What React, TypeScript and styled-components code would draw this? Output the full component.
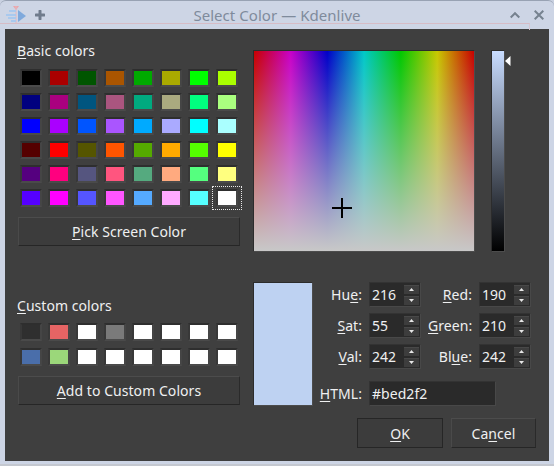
import React from "react";
import styled, { createGlobalStyle } from "styled-components";

const Global = createGlobalStyle`
  html, body { margin: 0; padding: 0; background: #c9d1e1; }
  body { font-family: "Noto Sans", "Open Sans", sans-serif; font-size: 14px; letter-spacing: 0.05px; color: #eff0f1; }
`;

const Window = styled.div`
  width: 554px;
  height: 466px;
  box-sizing: border-box;
  display: flex;
  flex-direction: column;
  overflow: hidden;
  background: #cdd5e5;
  border-top: 1px solid #98a2b3;
  border-radius: 6px 6px 0 0;
  box-shadow: inset 0 -2px 0 #c4c8d0;
`;

const TitleBar = styled.div`
  position: relative;
  height: 28px;
  flex: none;
  display: flex;
  align-items: center;
  padding: 0 10px 0 6px;
  &::after {
    content: "";
    position: absolute;
    left: 0;
    width: 529px;
    top: 22px;
    height: 6px;
    border-top: 1px solid #d6bcc6;
    border-right: 1px solid #d6c6d2;
  }
`;

const TitleIcons = styled.div`
  display: flex;
  align-items: center;
  gap: 7px;
  width: 60px;
  z-index: 1;
`;

const TitleText = styled.div`
  flex: 1;
  text-align: center;
  color: #7f8b9c;
  font-size: 15px;
  padding-left: 4px;
  z-index: 1;
`;

const TitleButtons = styled.div`
  width: 60px;
  display: flex;
  justify-content: flex-end;
  gap: 14px;
  z-index: 1;
`;

const Content = styled.div`
  flex: none;
  height: 432px;
  margin: 0 5px;
  background: #3f3f3f;
  display: flex;
  padding-left: 13px;
`;

const LeftColumn = styled.div`
  width: 223px;
  flex: none;
  display: flex;
  flex-direction: column;
`;

const SectionLabel = styled.div<{ $top: number }>`
  margin-top: ${(p) => p.$top}px;
  height: 19px;
  line-height: 19px;
  font-size: 14px;
  margin-left: -1px;
`;

const Key = styled.span`
  text-decoration: underline;
  text-underline-offset: 2px;
  text-decoration-thickness: 1px;
`;

const SwatchGrid = styled.div<{ $top: number; $rowGap: number }>`
  margin-top: ${(p) => p.$top}px;
  margin-left: 2px;
  display: grid;
  grid-template-columns: repeat(8, 22px);
  column-gap: 6px;
  row-gap: ${(p) => p.$rowGap}px;
`;

const Swatch = styled.div<{ $color: string; $selected?: boolean }>`
  position: relative;
  box-sizing: border-box;
  width: 22px;
  height: 18px;
  background: ${(p) => p.$color};
  border: 2px solid;
  border-color: #2e2e2e #454545 #4a4a4a #383838;
  ${(p) =>
    p.$selected
      ? `&::after {
          content: "";
          position: absolute;
          inset: -5px -6px -5px -6px;
          border: 1px dotted #e8e8e8;
        }`
      : ""}
`;

const PushButton = styled.div<{ $top?: number; $width?: number; $height?: number; $default?: boolean }>`
  box-sizing: border-box;
  margin-top: ${(p) => p.$top ?? 0}px;
  width: ${(p) => p.$width ?? 222}px;
  height: ${(p) => p.$height ?? 29}px;
  display: flex;
  align-items: center;
  justify-content: center;
  font-size: 14px;
  background: #3c3c3c;
  border: 1px solid;
  border-color: ${(p) =>
    p.$default ? "#262626" : "#4c4c4c #2a2a2a #262626 #4a4a4a"};
`;

const RightColumn = styled.div`
  margin-left: 12px;
  width: 296px;
  flex: none;
  display: flex;
  flex-direction: column;
  padding-top: 21px;
`;

const PickerRow = styled.div`
  display: flex;
  height: 202px;
`;

const Spectrum = styled.div`
  position: relative;
  box-sizing: border-box;
  width: 222px;
  height: 202px;
  border: 1px solid #2c2c2c;
  border-right-color: #4c4c4c;
  border-bottom-color: #4c4c4c;
  background:
    linear-gradient(to bottom, rgba(200, 200, 200, 0), #c8c8c8),
    linear-gradient(to right, #c80000, #c800c8, #0000c8, #00c8c8, #00c800, #c8c800, #c80000);
`;

const Cross = styled.svg`
  position: absolute;
  left: 78px;
  top: 147px;
`;

const ValueStrip = styled.div`
  position: relative;
  box-sizing: border-box;
  margin-left: 16px;
  width: 14px;
  height: 202px;
  border: 1px solid #2c2c2c;
  border-right-color: #4c4c4c;
  border-bottom-color: #4c4c4c;
  background: linear-gradient(to bottom, #c8dcff, #000000);
`;

const ValueArrow = styled.svg`
  position: absolute;
  left: 13px;
  top: 5px;
`;

const BottomRow = styled.div`
  margin-top: 30px;
  display: flex;
`;

const Preview = styled.div`
  box-sizing: border-box;
  flex: none;
  width: 60px;
  height: 124px;
  background: #bed2f2;
  border: 1px solid #2c2c2c;
  border-right-color: #4c4c4c;
  border-bottom-color: #4c4c4c;
`;

const Fields = styled.div`
  display: grid;
  grid-template-columns: 49px 52px 44px 52px;
  grid-auto-rows: 25px;
  column-gap: 7px;
  row-gap: 6px;
  align-items: center;
`;

const FieldLabel = styled.label`
  text-align: right;
  font-size: 14px;
  white-space: nowrap;
`;

const HtmlRow = styled.div`
  grid-column: 1 / span 4;
  align-self: start;
  margin-top: 6px;
  display: grid;
  grid-template-columns: 49px 127px;
  column-gap: 7px;
  align-items: center;
  height: 25px;
`;

const Spin = styled.div`
  box-sizing: border-box;
  height: 25px;
  width: 52px;
  background: #2a2a2a;
  border: 1px solid #484848;
  border-top-color: #333;
  border-left-color: #333;
  display: flex;
  align-items: center;
  padding-left: 2px;
  font-size: 14px;
`;

const SpinValue = styled.span`
  flex: 1;
`;

const SpinButtons = styled.div`
  width: 15px;
  margin-right: 1px;
  display: flex;
  flex-direction: column;
  gap: 2px;
`;

const SpinButton = styled.div`
  height: 9px;
  background: #3d3d3d;
  border-top: 1px solid #484848;
  box-sizing: border-box;
  display: flex;
  align-items: center;
  justify-content: center;
`;

const HtmlInput = styled.div`
  box-sizing: border-box;
  height: 25px;
  background: #2a2a2a;
  border: 1px solid #484848;
  border-top-color: #333;
  border-left-color: #333;
  display: flex;
  align-items: center;
  padding-left: 2px;
  font-size: 14px;
`;

const DialogButtons = styled.div`
  margin-top: 12px;
  display: flex;
  justify-content: flex-end;
  gap: 8px;
  padding-right: 13px;
`;

const basic = [
  "#000000", "#aa0000", "#005500", "#aa5500", "#00aa00", "#aaaa00", "#00ff00", "#aaff00",
  "#00007f", "#aa007f", "#00557f", "#aa557f", "#00aa7f", "#aaaa7f", "#00ff7f", "#aaff7f",
  "#0000ff", "#aa00ff", "#0055ff", "#aa55ff", "#00aaff", "#aaaaff", "#00ffff", "#aaffff",
  "#550000", "#ff0000", "#555500", "#ff5500", "#55aa00", "#ffaa00", "#55ff00", "#ffff00",
  "#55007f", "#ff007f", "#55557f", "#ff557f", "#55aa7f", "#ffaa7f", "#55ff7f", "#ffff7f",
  "#5500ff", "#ff00ff", "#5555ff", "#ff55ff", "#55aaff", "#ffaaff", "#55ffff", "#ffffff",
];

const custom = [
  "#2f2f2f", "#e66464", "#ffffff", "#7a7a7a", "#ffffff", "#ffffff", "#ffffff", "#ffffff",
  "#4a6eaa", "#9bd77a", "#ffffff", "#ffffff", "#ffffff", "#ffffff", "#ffffff", "#ffffff",
];

const SpinBox = ({ value }: { value: string }) => (
  <Spin>
    <SpinValue>{value}</SpinValue>
    <SpinButtons>
      <SpinButton>
        <svg width="5" height="3" viewBox="0 0 5 3"><path d="M2.5 0 5 3H0z" fill="#e8e8e8" /></svg>
      </SpinButton>
      <SpinButton>
        <svg width="5" height="3" viewBox="0 0 5 3"><path d="M0 0h5L2.5 3z" fill="#e8e8e8" /></svg>
      </SpinButton>
    </SpinButtons>
  </Spin>
);

export default function App() {
  return (
    <Window>
      <Global />
      <TitleBar>
        <TitleIcons>
          <svg width="22" height="24" viewBox="0 0 22 24">
            <path d="M7 3h6l-3 4z" fill="#eaa6aa" />
            <rect x="9.5" y="3" width="1" height="17" fill="#e3b6bf" />
            <path d="M12 7l8 6-8 6z" fill="#7fa9dc" />
            <rect x="3" y="7" width="7" height="2" fill="#a9c9ee" />
            <rect x="0" y="11" width="10" height="2" fill="#a9c9ee" />
            <rect x="2" y="14" width="8" height="2" fill="#a9c9ee" />
            <rect x="5" y="17" width="5" height="2" fill="#a9c9ee" />
          </svg>
          <svg width="10" height="10" viewBox="0 0 10 10">
            <path d="M5 1v8M1 5h8" fill="none" stroke="#6f7b8c" strokeWidth="3" strokeLinecap="round" />
          </svg>
        </TitleIcons>
        <TitleText>Select Color — Kdenlive</TitleText>
        <TitleButtons>
          <svg width="10" height="10" viewBox="0 0 10 10">
            <path d="M.7 7.5 5 3.2l4.3 4.3" fill="none" stroke="#76828f" strokeWidth="2" />
          </svg>
          <svg width="10" height="10" viewBox="0 0 10 10">
            <path d="M.7.7l8.6 8.6M9.3.7.7 9.3" fill="none" stroke="#76828f" strokeWidth="2" />
          </svg>
        </TitleButtons>
      </TitleBar>
      <Content>
        <LeftColumn>
          <SectionLabel $top={12}>
            <Key>B</Key>asic colors
          </SectionLabel>
          <SwatchGrid $top={9} $rowGap={6}>
            {basic.map((c, i) => (
              <Swatch key={i} $color={c} $selected={i === basic.length - 1} />
            ))}
          </SwatchGrid>
          <PushButton $top={10}>
            <span>
              <Key>P</Key>ick Screen Color
            </span>
          </PushButton>
          <SectionLabel $top={50}>
            <Key>C</Key>ustom colors
          </SectionLabel>
          <SwatchGrid $top={8} $rowGap={7}>
            {custom.map((c, i) => (
              <Swatch key={i} $color={c} />
            ))}
          </SwatchGrid>
          <PushButton $top={10}>
            <span>
              <Key>A</Key>dd to Custom Colors
            </span>
          </PushButton>
        </LeftColumn>
        <RightColumn>
          <PickerRow>
            <Spectrum>
              <Cross width="20" height="20" viewBox="0 0 20 20">
                <path d="M10 0v20M0 10h20" stroke="#000" strokeWidth="2" />
              </Cross>
            </Spectrum>
            <ValueStrip>
              <ValueArrow width="6" height="10" viewBox="0 0 6 10">
                <path d="M5.5 0v10L0 5z" fill="#fff" />
              </ValueArrow>
            </ValueStrip>
          </PickerRow>
          <BottomRow>
            <Preview />
            <Fields>
              <FieldLabel>Hu<Key>e</Key>:</FieldLabel>
              <SpinBox value="216" />
              <FieldLabel><Key>R</Key>ed:</FieldLabel>
              <SpinBox value="190" />
              <FieldLabel><Key>S</Key>at:</FieldLabel>
              <SpinBox value="55" />
              <FieldLabel><Key>G</Key>reen:</FieldLabel>
              <SpinBox value="210" />
              <FieldLabel><Key>V</Key>al:</FieldLabel>
              <SpinBox value="242" />
              <FieldLabel>Bl<Key>u</Key>e:</FieldLabel>
              <SpinBox value="242" />
              <HtmlRow>
                <FieldLabel><Key>H</Key>TML:</FieldLabel>
                <HtmlInput>#bed2f2</HtmlInput>
              </HtmlRow>
            </Fields>
          </BottomRow>
          <DialogButtons>
            <PushButton $width={86} $height={30} $default>
              <span><Key>O</Key>K</span>
            </PushButton>
            <PushButton $width={85} $height={30}>
              <span>Ca<Key>n</Key>cel</span>
            </PushButton>
          </DialogButtons>
        </RightColumn>
      </Content>
    </Window>
  );
}
